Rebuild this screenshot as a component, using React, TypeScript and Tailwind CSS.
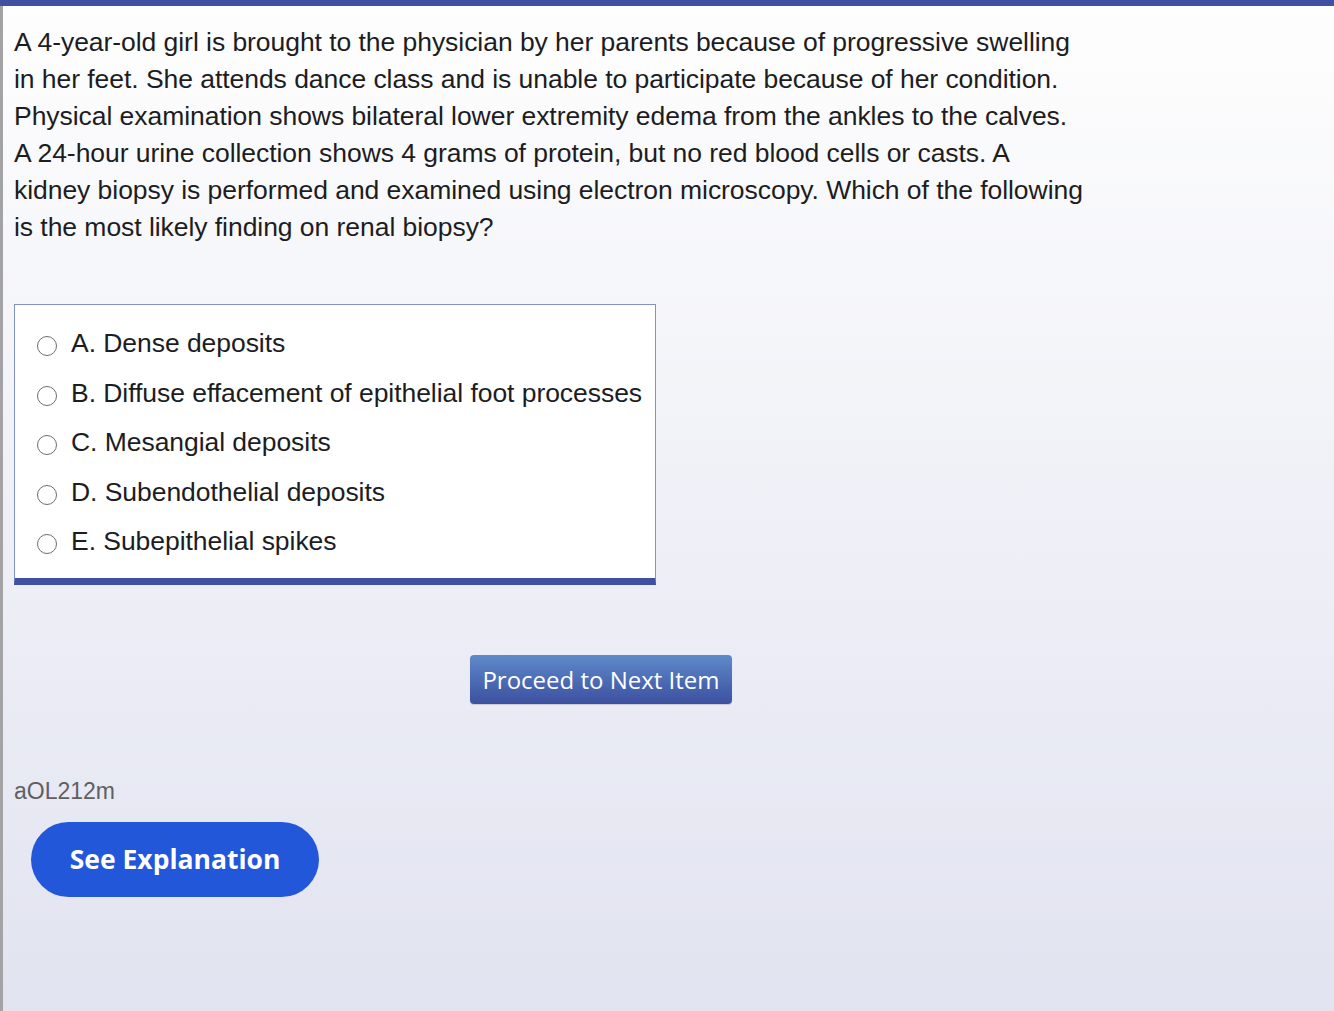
import React from "react";

const options = [
  "A. Dense deposits",
  "B. Diffuse effacement of epithelial foot processes",
  "C. Mesangial deposits",
  "D. Subendothelial deposits",
  "E. Subepithelial spikes",
];

const lines = [
  "A 4-year-old girl is brought to the physician by her parents because of progressive swelling",
  "in her feet. She attends dance class and is unable to participate because of her condition.",
  "Physical examination shows bilateral lower extremity edema from the ankles to the calves.",
  "A 24-hour urine collection shows 4 grams of protein, but no red blood cells or casts. A",
  "kidney biopsy is performed and examined using electron microscopy. Which of the following",
  "is the most likely finding on renal biopsy?",
];

export default function App() {
  return (
    <div className="w-[1334px] h-[1011px] overflow-hidden flex flex-col bg-gradient-to-b from-[#fefefe] to-[#e1e3f0]">
      <div className="h-[6px] bg-[#3f51a0] shrink-0" />
      <div className="flex flex-1 min-h-0">
        <div className="w-[3px] bg-[#a3a3a6] shrink-0" />
        <div className="flex-1 flex flex-col pl-[11px] pt-[18px] font-['Liberation_Sans',Arial,sans-serif] text-[#1d1d1f]">
          <div className="text-[26.5px] leading-[37px] tracking-[-0.05px]">
            {lines.map((l) => (
              <div key={l} className="whitespace-nowrap">{l}</div>
            ))}
          </div>
          <div className="mt-[58px] w-[642px] h-[281px] bg-white border border-[#8290cc] border-b-[7px] border-b-[#3f51a0] pt-[24px] pl-[22px] flex flex-col gap-[21.5px]">
            {options.map((o) => (
              <div key={o} className="flex items-center h-[28px]">
                <span className="w-[20px] h-[20px] rounded-full border border-[#6e6e70] bg-white mt-[6px] shrink-0" />
                <span className="ml-[14px] text-[26.5px] leading-[28px] tracking-[-0.05px] whitespace-nowrap text-[#1d1d1f]">{o}</span>
              </div>
            ))}
          </div>
          <div className="mt-[70px] flex">
            <button className="ml-[456px] w-[262px] h-[49px] rounded-[4px] bg-gradient-to-b from-[#5e8ac9] to-[#3d50a0] text-white text-[24px] font-['Open_Sans',sans-serif] font-normal shadow-[0_1px_1px_rgba(0,0,0,0.15)]">
              Proceed to Next Item
            </button>
          </div>
          <div className="mt-[74px] text-[23px] leading-[26px] text-[#5f5f62]">aOL212m</div>
          <div className="mt-[18px] pl-[17px]">
            <button className="w-[288px] h-[75px] rounded-full bg-[#2357da] text-white text-[26.5px] font-bold font-['Open_Sans',sans-serif]">
              See Explanation
            </button>
          </div>
        </div>
      </div>
    </div>
  );
}
